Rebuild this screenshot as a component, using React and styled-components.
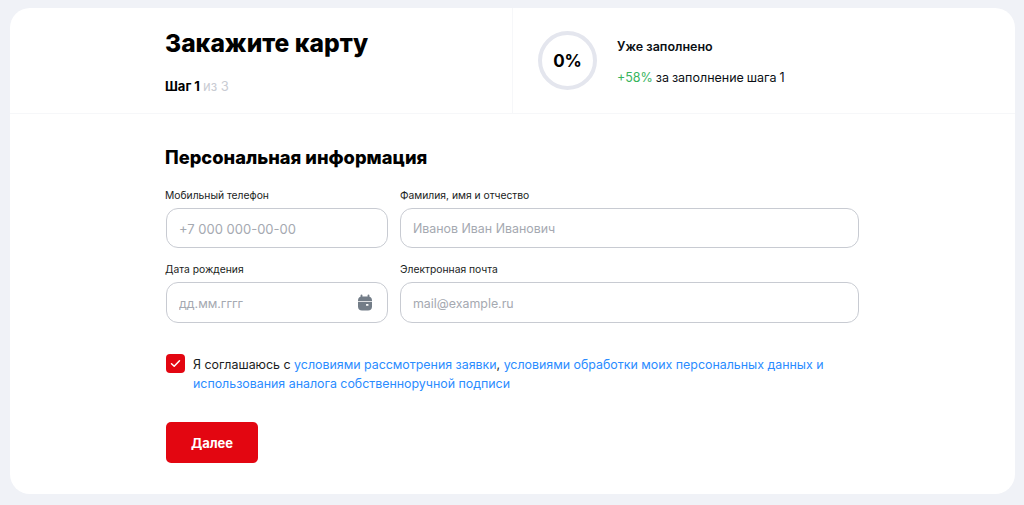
import styled, { createGlobalStyle } from "styled-components";

const GlobalStyle = createGlobalStyle`
  * { box-sizing: border-box; }
  html, body { margin: 0; padding: 0; height: 100%; }
  body {
    background: #f0f2f7;
    font-family: Inter, "Liberation Sans", sans-serif;
    color: #0b0f14;
  }
`;

const Page = styled.div`
  height: 505px;
  padding: 8px 9px 11px 10px;
  overflow: hidden;
`;

const Card = styled.main`
  height: 486px;
  background: #fff;
  border-radius: 20px;
  overflow: hidden;
`;

const Header = styled.header`
  display: grid;
  grid-template-columns: 503px 1fr;
  height: 106px;
  border-bottom: 1px solid #f6f7f9;
`;

const TitleCol = styled.div`
  padding: 20px 0 0 155px;
  border-right: 1px solid #f6f7f9;
`;

const Title = styled.h1`
  margin: 0;
  font-size: 24.6px;
  line-height: 30px;
  font-weight: 800;
  color: #000;
`;

const Step = styled.p`
  display: flex;
  gap: 3px;
  margin: 20px 0 0;
  font-size: 13px;
  line-height: 16px;
  color: #c9ccd3;
`;

const StepNow = styled.b`
  font-weight: 700;
  color: #000;
`;

const Progress = styled.div`
  display: flex;
  align-items: flex-start;
  gap: 20px;
  padding: 23px 0 0 25px;
`;

const Ring = styled.div`
  display: flex;
  align-items: center;
  justify-content: center;
  width: 59px;
  height: 59px;
  border: 4px solid #e4e6ee;
  border-radius: 50%;
  font-size: 17px;
  font-weight: 700;
  color: #000;
`;

const ProgressText = styled.div`
  display: flex;
  flex-direction: column;
  gap: 15px;
  padding-top: 8px;
`;

const ProgressTitle = styled.span`
  font-size: 12.5px;
  line-height: 16px;
  font-weight: 600;
`;

const ProgressNote = styled.span`
  font-size: 12.5px;
  line-height: 16px;
  word-spacing: -0.6px;
`;

const Green = styled.span`
  color: #37b45e;
`;

const Form = styled.form`
  width: 694px;
  margin-left: 155px;
  padding-top: 32px;
`;

const Heading = styled.h2`
  margin: 0 0 20px;
  font-size: 18.3px;
  line-height: 23px;
  font-weight: 800;
  color: #000;
`;

const Fields = styled.div`
  display: grid;
  grid-template-columns: 223px 459px;
  column-gap: 12px;
  row-gap: 15px;
`;

const Field = styled.label`
  display: flex;
  flex-direction: column;
  gap: 6px;
`;

const FieldLabel = styled.span`
  font-size: 10.3px;
  line-height: 13px;
  color: #1a1d22;
`;

const InputBox = styled.div`
  display: flex;
  align-items: center;
  justify-content: space-between;
  height: ${(p) => p.$h || 40}px;
  margin-left: ${(p) => (p.$first ? 1 : 0)}px;
  padding: 0 14px 0 12px;
  border: 1px solid #c8cbd2;
  border-radius: 12px;
`;

const Input = styled.input`
  flex: 1;
  min-width: 0;
  border: 0;
  outline: 0;
  padding: 1px 0 0;
  background: none;
  font: 400 ${(p) => p.$size || 12.4}px Inter, "Liberation Sans", sans-serif;
  color: #1a1d22;
  &::placeholder {
    color: #a5a9b1;
    opacity: 1;
  }
`;

const Agree = styled.div`
  display: flex;
  gap: 8px;
  margin: 31px 0 0 1px;
`;

const Check = styled.span`
  display: flex;
  align-items: center;
  justify-content: center;
  flex: none;
  width: 19px;
  height: 19px;
  border-radius: 4px;
  background: #e30611;
`;

const AgreeText = styled.p`
  margin: 0;
  padding-top: 1px;
  font-size: 12.4px;
  line-height: 19px;
  color: #1a1d22;
`;

const Link = styled.a`
  color: #2a8cff;
  text-decoration: none;
`;

const Next = styled.button`
  display: block;
  width: 92px;
  height: 41px;
  margin: 29px 0 0 1px;
  border: 0;
  border-radius: 5px;
  background: #e30611;
  color: #fff;
  font: 700 13px Inter, "Liberation Sans", sans-serif;
`;

function CalendarIcon() {
  return (
    <svg width="16" height="17" viewBox="0 0 16 17" fill="none">
      <rect x="3.6" y="0.5" width="1.8" height="4" rx="0.9" fill="#737d88" />
      <rect x="10.6" y="0.5" width="1.8" height="4" rx="0.9" fill="#737d88" />
      <path d="M1 6.5C1 4 2.5 2.5 5 2.5h6c2.5 0 4 1.5 4 4V7H1z" fill="#737d88" />
      <path d="M1 7.8h14v4.7c0 2.5-1.5 4-4 4H5c-2.5 0-4-1.5-4-4z" fill="#737d88" />
      <rect x="9" y="10" width="2.5" height="1.8" rx="0.6" fill="#fff" />
    </svg>
  );
}

function CheckIcon() {
  return (
    <svg width="11" height="9" viewBox="0 0 11 9" fill="none">
      <path d="M1.5 4.8L4.2 7.3 9.5 1.7" stroke="#fff" strokeWidth="1.5" strokeLinecap="round" strokeLinejoin="round" />
    </svg>
  );
}

export default function App() {
  return (
    <Page>
      <GlobalStyle />
      <Card>
        <Header>
          <TitleCol>
            <Title>Закажите карту</Title>
            <Step>
              <StepNow>Шаг 1</StepNow>
              <span>из 3</span>
            </Step>
          </TitleCol>
          <Progress>
            <Ring>0%</Ring>
            <ProgressText>
              <ProgressTitle>Уже заполнено</ProgressTitle>
              <ProgressNote>
                <Green>+58%</Green> за заполнение шага 1
              </ProgressNote>
            </ProgressText>
          </Progress>
        </Header>
        <Form>
          <Heading>Персональная информация</Heading>
          <Fields>
            <Field>
              <FieldLabel>Мобильный телефон</FieldLabel>
              <InputBox $first>
                <Input $size={13} placeholder="+7 000 000-00-00" />
              </InputBox>
            </Field>
            <Field>
              <FieldLabel>Фамилия, имя и отчество</FieldLabel>
              <InputBox>
                <Input placeholder="Иванов Иван Иванович" />
              </InputBox>
            </Field>
            <Field>
              <FieldLabel>Дата рождения</FieldLabel>
              <InputBox $first $h={41}>
                <Input placeholder="дд.мм.гггг" />
                <CalendarIcon />
              </InputBox>
            </Field>
            <Field>
              <FieldLabel>Электронная почта</FieldLabel>
              <InputBox $h={41}>
                <Input placeholder="mail@example.ru" />
              </InputBox>
            </Field>
          </Fields>
          <Agree>
            <Check>
              <CheckIcon />
            </Check>
            <AgreeText>
              Я соглашаюсь с <Link href="#">условиями рассмотрения заявки</Link>,{" "}
              <Link href="#">условиями обработки моих персональных данных и использования аналога собственноручной подписи</Link>
            </AgreeText>
          </Agree>
          <Next type="button">Далее</Next>
        </Form>
      </Card>
    </Page>
  );
}
